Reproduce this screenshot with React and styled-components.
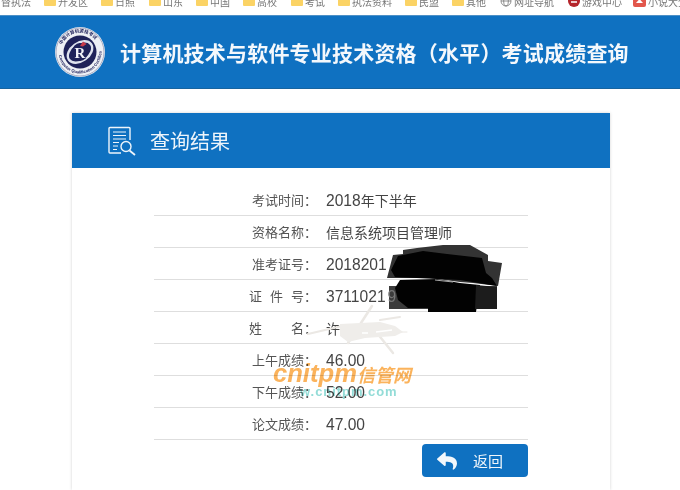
import React from "react";
import styled, { createGlobalStyle } from "styled-components";
import { FaReply } from "react-icons/fa";

const Global = createGlobalStyle`
  html, body { margin: 0; padding: 0; background: #fff; }
  body { font-family: "Liberation Sans", "Noto Sans CJK SC", sans-serif; }
`;

const Page = styled.div`
  position: relative;
  width: 680px;
  height: 490px;
  overflow: hidden;
  background: #fff;
  filter: blur(0.35px);
`;

const BookmarkBar = styled.div`
  display: flex;
  align-items: flex-start;
  height: 15px;
  overflow: hidden;
  background: #fff;
`;

const Bookmark = styled.div`
  flex: none;
  display: flex;
  align-items: center;
  justify-content: ${(p) => (p.$end ? "flex-end" : "flex-start")};
  gap: 2px;
  width: ${(p) => p.$w}px;
  height: 12px;
  margin-top: -5px;
  padding-right: ${(p) => (p.$end ? "13px" : "0")};
  box-sizing: border-box;
  font: 10px "Noto Sans CJK SC", sans-serif;
  color: #777;
  white-space: nowrap;
`;

const Folder = styled.span`
  flex: none;
  width: 12px;
  height: 10px;
  background: #fbd365;
  border-radius: 1px;
`;

const Banner = styled.header`
  display: flex;
  align-items: center;
  gap: 15px;
  height: 74px;
  padding-left: 55px;
  box-sizing: border-box;
  background: #0f71c1;
  border-top: 1px solid #4d90c6;
  border-bottom: 1px solid #17649f;
`;

const BannerTitle = styled.h1`
  margin: 0;
  font: 700 21px "Noto Sans CJK SC", sans-serif;
  letter-spacing: 0.2px;
  color: #f4f8fc;
  white-space: nowrap;
`;

const Card = styled.section`
  width: 538px;
  height: 377px;
  margin: 24px 0 0 72px;
  box-shadow: 0 0 3px rgba(0, 0, 0, 0.18);
  background: #fff;
`;

const CardHead = styled.div`
  display: flex;
  align-items: center;
  gap: 14px;
  height: 55px;
  padding-left: 36px;
  background: #0f71c1;
`;

const CardTitle = styled.h2`
  margin: 0;
  font: 400 20px "Noto Sans CJK SC", sans-serif;
  color: #eef5fb;
`;

const CardBody = styled.div`
  display: flex;
  flex-direction: column;
  width: 374px;
  margin: 0 auto;
  padding-top: 16px;
`;

const Row = styled.div`
  display: flex;
  align-items: center;
  gap: 9px;
  height: 32px;
  box-sizing: border-box;
  border-bottom: 1px solid #dedede;
`;

const Label = styled.span`
  flex: none;
  width: 163px;
  text-align: right;
  font: 13px "Noto Sans CJK SC", sans-serif;
  color: #555;
  white-space: nowrap;
`;

const Spaced = styled.span`
  letter-spacing: ${(p) => p.$gap}px;
`;

const Value = styled.span`
  font: 14px "Noto Sans CJK SC", sans-serif;
  color: #444;
  white-space: nowrap;
`;

const Num = styled.span`
  font: 15.6px "Liberation Sans", sans-serif;
`;

const BackButton = styled.button`
  display: flex;
  align-items: center;
  align-self: flex-end;
  gap: 16px;
  width: 106px;
  height: 33px;
  margin-top: 4px;
  padding: 0 0 0 15px;
  border: 0;
  border-radius: 4px;
  background: #0f71c1;
  color: #f2f7fb;
  font: 15px "Noto Sans CJK SC", sans-serif;
`;

const Overlay = styled.svg`
  position: absolute;
  left: ${(p) => p.$x}px;
  top: ${(p) => p.$y}px;
  pointer-events: none;
`;

const Mark = styled.div`
  position: absolute;
  left: 273px;
  top: 359px;
  display: flex;
  flex-direction: column;
  mix-blend-mode: multiply;
  white-space: nowrap;
`;

const MarkMain = styled.div`
  display: flex;
  align-items: baseline;
  height: 25px;
  font: italic 700 25.6px "Liberation Sans", sans-serif;
  color: #fbb35c;
`;

const MarkCjk = styled.span`
  font: italic 700 18px "Noto Sans CJK SC", sans-serif;
`;

const MarkSub = styled.div`
  margin-left: 27px;
  font: 700 13px "Liberation Sans", sans-serif;
  letter-spacing: 0.95px;
  color: #93dcd7;
`;

const Logo = () => (
  <svg width="50" height="50" viewBox="0 0 50 50">
    <defs>
      <path id="logoTop" d="M5.500 25a19.500 19.500 0 0 1 39 0" />
      <path id="logoBottom" d="M3.500 25a21.500 21.500 0 0 0 43 0" />
    </defs>
    <circle cx="25" cy="25" r="25" fill="#eef0f5" />
    <circle cx="25" cy="25" r="24" fill="none" stroke="#8b90ad" strokeWidth="0.700" />
    <circle cx="25" cy="25" r="16.500" fill="#1f2259" />
    <text fontSize="4.500" fontWeight="700" fill="#23265f" fontFamily="Noto Sans CJK SC, sans-serif">
      <textPath href="#logoTop" startOffset="12%">中国计算机资格考试</textPath>
    </text>
    <text fontSize="4.200" fontWeight="700" fill="#23265f" fontFamily="Liberation Sans, sans-serif">
      <textPath href="#logoBottom" startOffset="5%">Computer Qualification Certification</textPath>
    </text>
    <ellipse cx="25" cy="25" rx="13.500" ry="9" fill="none" stroke="#dfe3ee" strokeWidth="2.400" transform="rotate(-35 25 25)" />
    <ellipse cx="25" cy="25" rx="8" ry="9" fill="#1f2259" />
    <text x="25" y="31" fontSize="15" fontWeight="700" textAnchor="middle" fill="#f2f3f8" fontFamily="Liberation Serif, serif">R</text>
    <path d="M25 19L28 14.500 31.500 17 28 19.500Z" fill="#c93a4a" />
  </svg>
);

const ReportIcon = () => (
  <svg width="28" height="30" viewBox="0 0 28 30" fill="none" stroke="#eef5fb" strokeWidth="1.400">
    <path d="M22 14V2.500a1 1 0 0 0-1-1H2a1 1 0 0 0-1 1V26a1 1 0 0 0 1 1H13" />
    <path d="M5 6H18M5 9.500H18M5 13H18M5 16.500H11M5 20H10M5 23.500H9" strokeWidth="1.100" />
    <circle cx="18" cy="20.500" r="5" />
    <path d="M21.500 24.500L27 29" strokeWidth="1.800" />
  </svg>
);

const GlobeIcon = () => (
  <svg width="12" height="12" viewBox="0 0 12 12" fill="none" stroke="#777" strokeWidth="0.800">
    <circle cx="6" cy="6" r="5" />
    <ellipse cx="6" cy="6" rx="2.300" ry="5" />
    <path d="M1 6H11" />
  </svg>
);

const GameIcon = () => (
  <svg width="12" height="12" viewBox="0 0 12 12">
    <circle cx="6" cy="6" r="6" fill="#b5252b" />
    <path d="M3 7H9" stroke="#fff" strokeWidth="1.500" />
  </svg>
);

const NovelIcon = () => (
  <svg width="13" height="12" viewBox="0 0 13 12">
    <rect width="13" height="12" rx="2" fill="#e2574c" />
    <path d="M6.500 4L10 8H3Z" fill="#fff" />
  </svg>
);

const bookmarks = [
  ["督执法", 44, "end"],
  ["开发区", 57],
  ["日照", 48],
  ["山东", 47],
  ["中国", 47],
  ["高校", 48],
  ["考试", 47],
  ["执法资料", 67],
  ["民盟", 47],
  ["其他", 48],
  ["网址导航", 68, "globe"],
  ["游戏中心", 65, "game"],
  ["小说大全", 60, "novel"],
];

const Redaction = () => (
  <Overlay $x={380} $y={240} width="130" height="75" viewBox="380 240 130 75">
    <path
      d="M403 250L417 248 443 245 470 245 488 255 488 261 502 263 498 286 473 283 460 282 430 278 387 278 393 255 403 254Z"
      fill="#333"
    />
    <rect x="389" y="286" width="108" height="23" fill="#3b3b3b" />
    <path
      d="M398 256L423 251 447 254 482 258 486 273 492 278 497 286 460 280 395 277 391 270Z"
      fill="#020202"
    />
    <path
      d="M395 288L400 280 437 279 460 283 480 285 476 312 428 312 428 308 408 308 398 300Z"
      fill="#020202"
    />
    <path d="M476 285L497 287 497 309 475 309Z" fill="#1c1c1c" />
    <path d="M435 280L453 282" stroke="#aaa" strokeWidth="1.200" />
    <text x="387.500" y="302" fontSize="15.600" fill="#777" fontFamily="Liberation Sans, sans-serif">9</text>
  </Overlay>
);

const Scratch = () => (
  <Overlay $x={300} $y={300} width="120" height="65" viewBox="300 300 120 65">
    <g fill="none" stroke="#ebe8e4" strokeLinecap="round">
      <path d="M308 334L342 326" strokeWidth="2.200" />
      <path d="M395 332L407 332" strokeWidth="1" />
      <path d="M348 343L372 306" strokeWidth="2.500" />
      <path d="M377 333L393 353" strokeWidth="2.500" />
      <path d="M380 320L400 317" strokeWidth="2" />
    </g>
    <path d="M340 324L380 322 395 326 403 332 395 336 365 338 348 342 340 336Z" fill="#efedea" />
    <path d="M362 333H368M376 332L392 330" stroke="#fff" strokeWidth="1.500" />
  </Overlay>
);

const rows = [
  [<>考试时间：</>, <><Num>2018</Num>年下半年</>],
  [<>资格名称：</>, <>信息系统项目管理师</>],
  [<>准考证号：</>, <Num>2018201</Num>],
  [<><Spaced $gap={8}>证件</Spaced>号：</>, <Num>3711021</Num>],
  [<><Spaced $gap={29}>姓</Spaced>名：</>, <>许</>],
  [<>上午成绩：</>, <Num>46.00</Num>],
  [<>下午成绩：</>, <Num>52.00</Num>],
  [<>论文成绩：</>, <Num>47.00</Num>],
];

export default function App() {
  return (
    <Page>
      <Global />
      <BookmarkBar>
        {bookmarks.map(([name, width, kind]) => (
          <Bookmark key={name} $w={width} $end={kind === "end"}>
            {kind === "globe" && <GlobeIcon />}
            {kind === "game" && <GameIcon />}
            {kind === "novel" && <NovelIcon />}
            {!kind && <Folder />}
            {name}
          </Bookmark>
        ))}
      </BookmarkBar>
      <Banner>
        <Logo />
        <BannerTitle>计算机技术与软件专业技术资格（水平）考试成绩查询</BannerTitle>
      </Banner>
      <Card>
        <CardHead>
          <ReportIcon />
          <CardTitle>查询结果</CardTitle>
        </CardHead>
        <CardBody>
          {rows.map(([label, value], i) => (
            <Row key={i}>
              <Label>{label}</Label>
              <Value>{value}</Value>
            </Row>
          ))}
          <BackButton>
            <FaReply size={20} />
            返回
          </BackButton>
        </CardBody>
      </Card>
      <Scratch />
      <Redaction />
      <Mark>
        <MarkMain>
          cnitpm<MarkCjk>信管网</MarkCjk>
        </MarkMain>
        <MarkSub>w.cnitpm.com</MarkSub>
      </Mark>
    </Page>
  );
}
